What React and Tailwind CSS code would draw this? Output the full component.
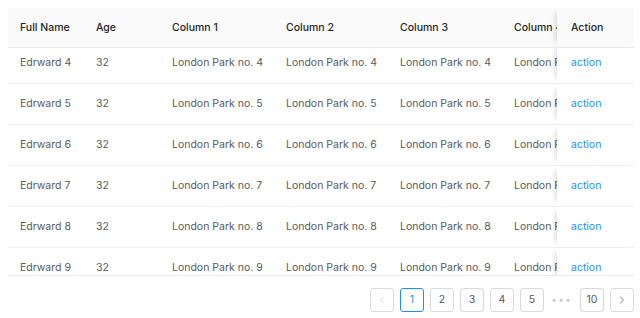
import { ChevronLeft, ChevronRight } from 'lucide-react'

const rows = [4, 5, 6, 7, 8, 9].map((n) => ({
  key: n,
  name: `Edrward ${n}`,
  age: 32,
  address: `London Park no. ${n}`,
}))

const fixedShadow = 'relative z-10 bg-white shadow-[-6px_0_6px_-5px_rgba(0,0,0,0.18)]'

function Pager() {
  const btn = 'w-6 h-6 flex items-center justify-center rounded-[3px] border border-[#d9d9d9] bg-white text-[#595959]'
  return (
    <div className="flex justify-end items-center gap-1.5 mt-3">
      <div className={`${btn} text-[#c4c4c4]`}>
        <ChevronLeft size={12} strokeWidth={1.5} />
      </div>
      <div className={`${btn} !border-[#1890ff] !text-[#1890ff]`}>1</div>
      {[2, 3, 4, 5].map((p) => (
        <div key={p} className={btn}>{p}</div>
      ))}
      <div className="w-6 h-6 flex items-center justify-center text-[#c4c4c4] tracking-[2px] text-[9px]">•••</div>
      <div className={btn}>10</div>
      <div className={btn}>
        <ChevronRight size={12} strokeWidth={1.5} />
      </div>
    </div>
  )
}

export default function App() {
  const cell = 'shrink-0 pl-3 flex items-center whitespace-nowrap'
  return (
    <div
      className="pl-2 pr-1.5 pt-2 bg-white w-[640px] h-[318px] overflow-hidden text-[10.5px] text-[#595959]"
      style={{ fontFamily: 'Inter, "Liberation Sans", sans-serif' }}
    >
      <div className="border-b border-[#ebebeb]">
        {/* header */}
        <div className="flex h-10 bg-[#fafafa] border-b border-[#ebebeb] font-medium text-[#262626]">
          <div className="flex-1 min-w-0 flex overflow-hidden">
            <div className={`${cell} w-[76px]`}>Full Name</div>
            <div className={`${cell} w-[76px]`}>Age</div>
            <div className={`${cell} w-[114px]`}>Column 1</div>
            <div className={`${cell} w-[114px]`}>Column 2</div>
            <div className={`${cell} w-[114px]`}>Column 3</div>
            <div className={`${cell} w-[114px]`}>Column 4</div>
          </div>
          <div className={`w-[77px] shrink-0 pl-3.5 flex items-center ${fixedShadow} !bg-[#fafafa]`}>Action</div>
        </div>

        {/* body, scrolled a few pixels */}
        <div className="h-[227px] overflow-hidden">
          <div className="-mt-[5px]">
            {rows.map((r) => (
              <div key={r.key} className="flex h-[41px] border-b border-[#f0f0f0]">
                <div className="flex-1 min-w-0 flex overflow-hidden">
                  <div className={`${cell} w-[76px]`}>{r.name}</div>
                  <div className={`${cell} w-[76px]`}>{r.age}</div>
                  <div className={`${cell} w-[114px]`}>{r.address}</div>
                  <div className={`${cell} w-[114px]`}>{r.address}</div>
                  <div className={`${cell} w-[114px]`}>{r.address}</div>
                  <div className={`${cell} w-[114px]`}>{r.address}</div>
                </div>
                <div className={`w-[77px] shrink-0 pl-3.5 flex items-center ${fixedShadow}`}>
                  <a className="text-[#1890ff]">action</a>
                </div>
              </div>
            ))}
          </div>
        </div>
      </div>
      <Pager />
    </div>
  )
}
